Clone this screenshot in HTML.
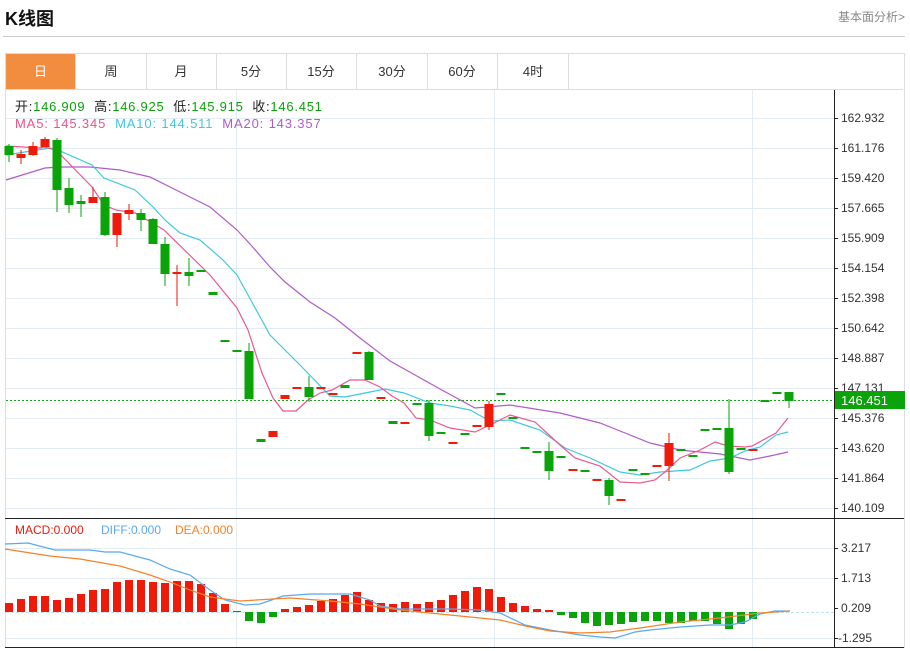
<!DOCTYPE html>
<html><head><meta charset="utf-8"><style>
body{margin:0;width:910px;height:651px;background:#fff;overflow:hidden;font-family:"Liberation Sans","Noto Sans CJK SC",sans-serif;position:relative}
.t{position:absolute;left:5px;top:5px;font-size:18px;font-weight:bold;color:#111}
.r{position:absolute;right:5px;top:8px;font-size:12px;color:#888}
.rule{position:absolute;left:3px;top:36px;width:902px;height:1px;background:#ccc}
.box{position:absolute;left:5px;top:53px;width:898px;height:594px;border:1px solid #ddd;border-bottom:none}
.tabs{position:absolute;left:6px;top:54px;height:35px;border-bottom:1px solid #ddd;width:897px}
.tab{position:absolute;top:0;height:35px;width:70px;border-right:1px solid #ddd;text-align:center;line-height:35px;font-size:13px;color:#333}
.info{position:absolute;left:15px;font-size:13px;white-space:pre;letter-spacing:0.75px}
svg{position:absolute;left:0;top:0}
</style></head><body>
<div class="t">K线图</div><div class="r">基本面分析&gt;</div><div class="rule"></div>
<div class="box"></div>
<div class="tabs">
<div class="tab" style="left:0;width:69px;background:#f28c3e;color:#fff">日</div>
<div class="tab" style="left:70px">周</div>
<div class="tab" style="left:140px">月</div>
<div class="tab" style="left:210px">5分</div>
<div class="tab" style="left:280px">15分</div>
<div class="tab" style="left:351px">30分</div>
<div class="tab" style="left:421px">60分</div>
<div class="tab" style="left:492px">4时</div>
</div>
<svg width="910" height="651" font-family="Liberation Sans, sans-serif" font-size="12">
<g stroke="#e2ecf2" stroke-width="1">
<line x1="6" x2="834" y1="118.5" y2="118.5"/><line x1="6" x2="834" y1="148.5" y2="148.5"/><line x1="6" x2="834" y1="178.5" y2="178.5"/><line x1="6" x2="834" y1="208.5" y2="208.5"/><line x1="6" x2="834" y1="238.5" y2="238.5"/><line x1="6" x2="834" y1="268.5" y2="268.5"/><line x1="6" x2="834" y1="298.5" y2="298.5"/><line x1="6" x2="834" y1="328.5" y2="328.5"/><line x1="6" x2="834" y1="358.5" y2="358.5"/><line x1="6" x2="834" y1="388.5" y2="388.5"/><line x1="6" x2="834" y1="418.5" y2="418.5"/><line x1="6" x2="834" y1="448.5" y2="448.5"/><line x1="6" x2="834" y1="478.5" y2="478.5"/><line x1="6" x2="834" y1="508.5" y2="508.5"/>
<line x1="6" x2="834" y1="548.5" y2="548.5"/><line x1="6" x2="834" y1="578.5" y2="578.5"/><line x1="6" x2="834" y1="638.5" y2="638.5"/>
<line x1="236.5" x2="236.5" y1="90" y2="647"/><line x1="494.5" x2="494.5" y1="90" y2="647"/><line x1="752.5" x2="752.5" y1="90" y2="647"/>
</g>
<line x1="6" x2="834" y1="612.5" y2="612.5" stroke="#bfe3ee" stroke-dasharray="3,2"/>
<line x1="834.5" x2="834.5" y1="90" y2="648" stroke="#222"/>
<line x1="5" x2="904" y1="518.5" y2="518.5" stroke="#222"/>
<line x1="5" x2="904" y1="647.5" y2="647.5" stroke="#222"/>
<g stroke="#222"><line x1="834" x2="838" y1="118.5" y2="118.5"/><line x1="834" x2="838" y1="148.5" y2="148.5"/><line x1="834" x2="838" y1="178.5" y2="178.5"/><line x1="834" x2="838" y1="208.5" y2="208.5"/><line x1="834" x2="838" y1="238.5" y2="238.5"/><line x1="834" x2="838" y1="268.5" y2="268.5"/><line x1="834" x2="838" y1="298.5" y2="298.5"/><line x1="834" x2="838" y1="328.5" y2="328.5"/><line x1="834" x2="838" y1="358.5" y2="358.5"/><line x1="834" x2="838" y1="388.5" y2="388.5"/><line x1="834" x2="838" y1="418.5" y2="418.5"/><line x1="834" x2="838" y1="448.5" y2="448.5"/><line x1="834" x2="838" y1="478.5" y2="478.5"/><line x1="834" x2="838" y1="508.5" y2="508.5"/><line x1="834" x2="838" y1="548.5" y2="548.5"/><line x1="834" x2="838" y1="578.5" y2="578.5"/><line x1="834" x2="838" y1="608.5" y2="608.5"/><line x1="834" x2="838" y1="638.5" y2="638.5"/></g>
<g fill="#333">
<text x="841" y="122">162.932</text><text x="841" y="152">161.176</text><text x="841" y="182">159.420</text><text x="841" y="212">157.665</text><text x="841" y="242">155.909</text><text x="841" y="272">154.154</text><text x="841" y="302">152.398</text><text x="841" y="332">150.642</text><text x="841" y="362">148.887</text><text x="841" y="392">147.131</text><text x="841" y="422">145.376</text><text x="841" y="452">143.620</text><text x="841" y="482">141.864</text><text x="841" y="512">140.109</text>
<text x="841" y="552">3.217</text><text x="841" y="582">1.713</text><text x="841" y="612">0.209</text><text x="838" y="642">-1.295</text>
</g>
<line x1="6" x2="834" y1="400.5" y2="400.5" stroke="#1aa81a" stroke-dasharray="2,2"/>
<rect x="835" y="391" width="70" height="18" fill="#0aa30a"/>
<text x="841" y="405" fill="#fff" font-size="13">146.451</text>
<polyline fill="none" stroke="#b05cc8" stroke-width="1.2" points="6,180 45,168 60,167 90,167 120,170 150,177 180,192 210,207 237,230 250,244 270,267 285,282 310,302 335,318 360,338 390,361 415,375 440,389 475,408 510,405 560,413 600,423 620,431 650,443 680,450 700,452 720,454 750,460 770,456 788,452"/>
<polyline fill="none" stroke="#3ec9e0" stroke-width="1.2" points="6,155 50,148 60,151 92,165 104,178 135,190 152,206 165,220 180,233 200,240 223,260 237,275 248,295 270,335 300,365 330,396 345,397 365,393 385,389 404,393 430,403 450,406 470,410 490,421 510,420 540,430 565,448 590,458 620,472 640,475 660,472 690,470 710,461 730,458 745,451 760,447 776,435 788,432"/>
<polyline fill="none" stroke="#ea5a8c" stroke-width="1.2" points="6,146 40,148 44,147 56,150 92,187 104,205 116,210 135,213 164,230 210,275 237,308 248,330 262,373 273,398 283,411 296,411 308,400 320,393 332,390 350,380 365,380 380,387 392,396 404,403 416,418 430,420 450,428 475,432 490,425 510,415 535,422 560,445 575,458 600,466 620,482 640,483 655,480 665,472 680,458 700,450 715,442 728,446 745,447 752,446 776,433 788,418"/>
<g fill="#0aa30a">
<rect x="8.5" y="144" width="1" height="18"/><rect x="4.5" y="146" width="9" height="9"/>
<rect x="56.5" y="138" width="1" height="74"/><rect x="52.5" y="140" width="9" height="50"/>
<rect x="68.5" y="178" width="1" height="35"/><rect x="64.5" y="188" width="9" height="17"/>
<rect x="80.5" y="195" width="1" height="22"/><rect x="76.5" y="201" width="9" height="3"/>
<rect x="104.5" y="192" width="1" height="44"/><rect x="100.5" y="197" width="9" height="38"/>
<rect x="140.5" y="209" width="1" height="22"/><rect x="136.5" y="213" width="9" height="7"/>
<rect x="152.5" y="218" width="1" height="26"/><rect x="148.5" y="219" width="9" height="25"/>
<rect x="164.5" y="237" width="1" height="49"/><rect x="160.5" y="244" width="9" height="30"/>
<rect x="188.5" y="258" width="1" height="28"/><rect x="184.5" y="272" width="9" height="4"/>
<rect x="196.5" y="270" width="9" height="2"/><rect x="208.5" y="292" width="9" height="3"/>
<rect x="220.5" y="340" width="9" height="2"/><rect x="232.5" y="350" width="9" height="2"/>
<rect x="248.5" y="343" width="1" height="56"/><rect x="244.5" y="351" width="9" height="48"/>
<rect x="256.5" y="439" width="9" height="3"/>
<rect x="308.5" y="376" width="1" height="26"/><rect x="304.5" y="387" width="9" height="10"/>
<rect x="340.5" y="385" width="9" height="3"/>
<rect x="368.5" y="351" width="1" height="29"/><rect x="364.5" y="352" width="9" height="28"/>
<rect x="388.5" y="421" width="9" height="3"/><rect x="412.5" y="403" width="9" height="2"/>
<rect x="428.5" y="400" width="1" height="41"/><rect x="424.5" y="403" width="9" height="33"/>
<rect x="436.5" y="432" width="9" height="2"/><rect x="460.5" y="433" width="9" height="2"/>
<rect x="496.5" y="393" width="9" height="2"/><rect x="508.5" y="417" width="9" height="2"/>
<rect x="520.5" y="447" width="9" height="2"/><rect x="532.5" y="451" width="9" height="2"/>
<rect x="548.5" y="442" width="1" height="38"/><rect x="544.5" y="451" width="9" height="20"/>
<rect x="556.5" y="456" width="9" height="2"/><rect x="580.5" y="470" width="9" height="2"/>
<rect x="608.5" y="478" width="1" height="27"/><rect x="604.5" y="480" width="9" height="16"/>
<rect x="628.5" y="469" width="9" height="2"/><rect x="640.5" y="473" width="9" height="2"/>
<rect x="676.5" y="449" width="9" height="2"/><rect x="688.5" y="455" width="9" height="2"/>
<rect x="700.5" y="429" width="9" height="2"/><rect x="712.5" y="428" width="9" height="2"/>
<rect x="728.5" y="399" width="1" height="75"/><rect x="724.5" y="428" width="9" height="44"/>
<rect x="736.5" y="448" width="9" height="2"/>
<rect x="760.5" y="400" width="9" height="2"/><rect x="772.5" y="392" width="9" height="2"/>
<rect x="788.5" y="392" width="1" height="16"/><rect x="784.5" y="392" width="9" height="9"/>
</g>
<g fill="#f01a0a">
<rect x="20.5" y="150" width="1" height="14"/><rect x="16.5" y="154" width="9" height="4"/>
<rect x="32.5" y="142" width="1" height="14"/><rect x="28.5" y="146" width="9" height="9"/>
<rect x="44.5" y="137" width="1" height="10"/><rect x="40.5" y="139" width="9" height="8"/>
<rect x="92.5" y="187" width="1" height="16"/><rect x="88.5" y="197" width="9" height="6"/>
<rect x="116.5" y="213" width="1" height="34"/><rect x="112.5" y="213" width="9" height="22"/>
<rect x="128.5" y="204" width="1" height="16"/><rect x="124.5" y="210" width="9" height="4"/>
<rect x="176.5" y="265" width="1" height="41"/><rect x="172.5" y="272" width="9" height="2"/>
<rect x="268.5" y="431" width="9" height="6"/><rect x="280.5" y="395" width="9" height="4"/>
<rect x="292.5" y="387" width="9" height="2"/><rect x="316.5" y="387" width="9" height="2"/>
<rect x="328.5" y="393" width="9" height="2"/><rect x="352.5" y="352" width="9" height="2"/>
<rect x="376.5" y="397" width="9" height="2"/><rect x="400.5" y="422" width="9" height="2"/>
<rect x="448.5" y="442" width="9" height="2"/><rect x="472.5" y="425" width="9" height="2"/>
<rect x="488.5" y="401" width="1" height="29"/><rect x="484.5" y="404" width="9" height="23"/>
<rect x="568.5" y="469" width="9" height="2"/><rect x="592.5" y="479" width="9" height="2"/>
<rect x="616.5" y="499" width="9" height="2"/><rect x="652.5" y="465" width="9" height="2"/>
<rect x="668.5" y="433" width="1" height="48"/><rect x="664.5" y="443" width="9" height="23"/>
<rect x="748.5" y="449" width="9" height="2"/>
</g>
<g fill="#f01a0a">
<rect x="5" y="603" width="8" height="9"/><rect x="17" y="599" width="8" height="13"/><rect x="29" y="596" width="8" height="16"/><rect x="41" y="596" width="8" height="16"/><rect x="53" y="600" width="8" height="12"/><rect x="65" y="598" width="8" height="14"/><rect x="77" y="594" width="8" height="18"/><rect x="89" y="590" width="8" height="22"/><rect x="101" y="589" width="8" height="23"/><rect x="113" y="582" width="8" height="30"/><rect x="125" y="580" width="8" height="32"/><rect x="137" y="580" width="8" height="32"/><rect x="149" y="582" width="8" height="30"/><rect x="161" y="583" width="8" height="29"/><rect x="173" y="581" width="8" height="31"/><rect x="185" y="581" width="8" height="31"/><rect x="197" y="584" width="8" height="28"/><rect x="209" y="593" width="8" height="19"/><rect x="221" y="604" width="8" height="8"/><rect x="233" y="611" width="8" height="1"/>
<rect x="281" y="609" width="8" height="3"/><rect x="293" y="607" width="8" height="5"/><rect x="305" y="605" width="8" height="7"/><rect x="317" y="601" width="8" height="11"/><rect x="329" y="599" width="8" height="13"/><rect x="341" y="595" width="8" height="17"/><rect x="353" y="592" width="8" height="20"/><rect x="365" y="600" width="8" height="12"/><rect x="377" y="603" width="8" height="9"/><rect x="389" y="604" width="8" height="8"/><rect x="401" y="602" width="8" height="10"/><rect x="413" y="604" width="8" height="8"/><rect x="425" y="602" width="8" height="10"/><rect x="437" y="600" width="8" height="12"/><rect x="449" y="595" width="8" height="17"/><rect x="461" y="591" width="8" height="21"/><rect x="473" y="587" width="8" height="25"/><rect x="485" y="589" width="8" height="23"/><rect x="497" y="597" width="8" height="15"/><rect x="509" y="603" width="8" height="9"/><rect x="521" y="606" width="8" height="6"/><rect x="533" y="609" width="8" height="3"/><rect x="545" y="610" width="8" height="2"/>
</g>
<g fill="#0aa30a">
<rect x="245" y="612" width="8" height="9"/><rect x="257" y="612" width="8" height="11"/><rect x="269" y="612" width="8" height="5"/>
<rect x="557" y="612" width="8" height="3"/><rect x="569" y="612" width="8" height="6"/><rect x="581" y="612" width="8" height="11"/><rect x="593" y="612" width="8" height="14"/><rect x="605" y="612" width="8" height="13"/><rect x="617" y="612" width="8" height="12"/><rect x="629" y="612" width="8" height="10"/><rect x="641" y="612" width="8" height="9"/><rect x="653" y="612" width="8" height="9"/><rect x="665" y="612" width="8" height="11"/><rect x="677" y="612" width="8" height="11"/><rect x="689" y="612" width="8" height="9"/><rect x="701" y="612" width="8" height="9"/><rect x="713" y="612" width="8" height="12"/><rect x="725" y="612" width="8" height="17"/><rect x="737" y="612" width="8" height="12"/><rect x="749" y="612" width="8" height="7"/>
</g>
<polyline fill="none" stroke="#5aa9f0" stroke-width="1.2" points="5,544 28,543 55,550 90,550 105,552 120,552 150,560 170,569 190,575 210,590 225,600 245,605 260,604 283,596 310,594 350,594 370,600 380,606 400,609 450,609 480,610 500,613 525,625 550,630 580,635 600,637 615,638 635,632 650,630 680,627 710,625 730,625 745,622 760,614 775,611 790,611"/>
<polyline fill="none" stroke="#f5822a" stroke-width="1.2" points="5,549 50,556 80,559 120,566 150,575 170,582 190,590 210,597 240,601 290,598 330,601 360,604 400,610 450,615 500,620 530,627 550,631 580,633 610,632 640,628 680,622 720,618 760,613 790,611"/>
<text x="15" y="534" fill="#f01a0a">MACD:0.000</text><text x="101" y="534" fill="#5aa9f0">DIFF:0.000</text><text x="175" y="534" fill="#f5822a">DEA:0.000</text>
</svg>
<div class="info" style="top:96px;color:#0aa30a"><span style="color:#222">开:</span>146.909  <span style="color:#222">高:</span>146.925  <span style="color:#222">低:</span>145.915  <span style="color:#222">收:</span>146.451</div>
<div class="info" style="top:116px;letter-spacing:0.85px"><span style="color:#f0508a">MA5: 145.345</span>  <span style="color:#3ec9e0">MA10: 144.511</span>  <span style="color:#b05cc8">MA20: 143.357</span></div>
</body></html>
